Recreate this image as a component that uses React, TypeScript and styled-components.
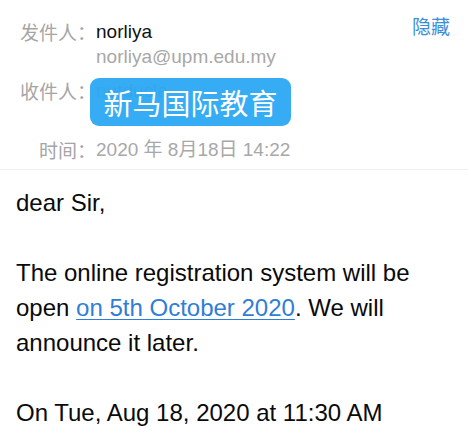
import { createGlobalStyle, styled } from "styled-components";

const GlobalStyle = createGlobalStyle`
  html, body {
    margin: 0;
    padding: 0;
    background: #ffffff;
  }
  body {
    font-family: "Liberation Sans", "Noto Sans CJK SC", sans-serif;
    -webkit-font-smoothing: antialiased;
  }
`;

export default function App() {
  return (
    <>
      <GlobalStyle />
      <Page>
        <Header>
          <HeaderRows>
            <Row>
              <Label>发件人：</Label>
              <Value>
                <Name>norliya</Name>
                <Muted>norliya@upm.edu.my</Muted>
              </Value>
            </Row>
            <Row>
              <Label>收件人：</Label>
              <Recipient>
                <Muted>nutducla</Muted>
                <Badge>新马国际教育</Badge>
              </Recipient>
            </Row>
            <Row>
              <Label>时间：</Label>
              <Muted>2020 年 8月18日 14:22</Muted>
            </Row>
          </HeaderRows>
          <HideLink>隐藏</HideLink>
        </Header>
        <Body>
          <Paragraph>dear Sir,</Paragraph>
          <Paragraph>
            The online registration system will be open{" "}
            <DateLink href="#">on 5th October 2020</DateLink>. We will announce
            it later.
          </Paragraph>
          <Paragraph>On Tue, Aug 18, 2020 at 11:30 AM</Paragraph>
        </Body>
      </Page>
    </>
  );
}

const Page = styled.div`
  width: 471px;
  height: 438px;
  overflow: hidden;
  background: #ffffff;
`;

const Header = styled.div`
  display: flex;
  justify-content: space-between;
  align-items: flex-start;
  padding: 19px 18px 7px 0;
  border-bottom: 1px solid #efefef;
  margin-right: 3px;
`;

const HeaderRows = styled.div`
  display: flex;
  flex-direction: column;
  gap: 9px;
`;

const Row = styled.div`
  display: flex;
  align-items: flex-start;
`;

const Label = styled.div`
  width: 96px;
  text-align: right;
  font-family: "Noto Sans CJK SC", sans-serif;
  font-size: 19px;
  line-height: 25px;
  color: #a5a5a5;
  white-space: nowrap;
`;

const Value = styled.div`
  display: flex;
  flex-direction: column;
`;

const Name = styled.div`
  font-size: 19px;
  line-height: 25px;
  color: #111111;
`;

const Muted = styled.div`
  font-size: 19px;
  line-height: 25px;
  color: #a8a8a8;
  white-space: nowrap;
`;

const Recipient = styled.div`
  position: relative;
  height: 50px;
`;

const Badge = styled.div`
  position: absolute;
  left: -6px;
  top: 0;
  width: 201px;
  height: 48px;
  border-radius: 9px;
  background: rgba(40, 167, 242, 0.94);
  color: #ffffff;
  font-family: "Noto Sans CJK SC", sans-serif;
  font-size: 29px;
  line-height: 48px;
  text-align: center;
  white-space: nowrap;
`;

const HideLink = styled.div`
  font-family: "Noto Sans CJK SC", sans-serif;
  font-size: 19px;
  line-height: 25px;
  margin-top: -6px;
  color: #3a8fd9;
`;

const Body = styled.div`
  padding: 15px 16px 0 16px;
  display: flex;
  flex-direction: column;
  gap: 35px;
`;

const Paragraph = styled.p`
  margin: 0;
  font-size: 24px;
  line-height: 35px;
  color: #0a0a0a;
`;

const DateLink = styled.a`
  color: #2f7ed6;
  text-decoration: underline;
  text-decoration-thickness: 1px;
  text-underline-offset: 3px;
`;
